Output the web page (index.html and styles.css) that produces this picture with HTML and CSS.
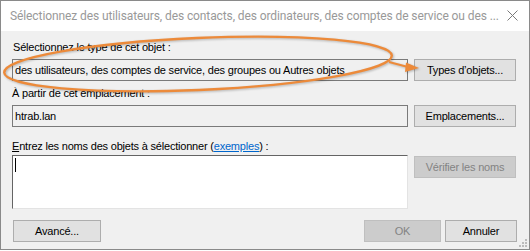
FILE: index.html
```html
<!DOCTYPE html>
<html lang="fr">
<head>
<meta charset="utf-8">
<link rel="stylesheet" href="styles.css">
</head>
<body>
<div class="window">
  <div class="titlebar">
    <span class="title">Sélectionnez des utilisateurs, des contacts, des ordinateurs, des comptes de service ou des ...</span>
    <svg class="close" width="11" height="11" viewBox="0 0 11 11"><path d="M0.5 0.5 L10.5 10.5 M10.5 0.5 L0.5 10.5" stroke="#7a7a7a" stroke-width="1" fill="none"/></svg>
  </div>
  <div class="content">
    <div class="label l1">Sélectionnez le type de cet objet :</div>
    <div class="row">
      <div class="field">des utilisateurs, des comptes de service, des groupes ou Autres objets</div>
      <div class="btn">Types d’objets...</div>
    </div>
    <div class="label l2">À partir de cet emplacement :</div>
    <div class="row">
      <div class="field">htrab.lan</div>
      <div class="btn">Emplacements...</div>
    </div>
    <div class="label l3"><u>E</u>ntrez les noms des objets à sélectionner (<span class="link">exemples</span>) :</div>
    <div class="row top">
      <div class="textarea"><span class="caret"></span></div>
      <div class="btn disabled">Vérifier les noms</div>
    </div>
    <div class="footer">
      <div class="btn adv">Avancé...</div>
      <div class="spacer"></div>
      <div class="btn disabled ok">OK</div>
      <div class="btn cancel">Annuler</div>
    </div>
  </div>
  <svg class="grip" width="8" height="8" viewBox="0 0 8 8">
    <rect x="6" y="0" width="2" height="2" fill="#bcbcbc"/>
    <rect x="3" y="3" width="2" height="2" fill="#bcbcbc"/>
    <rect x="6" y="3" width="2" height="2" fill="#bcbcbc"/>
    <rect x="0" y="6" width="2" height="2" fill="#bcbcbc"/>
    <rect x="3" y="6" width="2" height="2" fill="#bcbcbc"/>
    <rect x="6" y="6" width="2" height="2" fill="#bcbcbc"/>
  </svg>
  <svg class="annot" width="530" height="251" viewBox="0 0 530 251">
    <ellipse cx="198" cy="64" rx="194" ry="26" transform="rotate(-2.5 198 64)" fill="none" stroke="#ec8a3a" stroke-width="2.4"/>
    <path d="M389 62 L408 67" stroke="#ec8a3a" stroke-width="2" fill="none"/>
    <path d="M406 62.5 L419 68 L405 72 Z" fill="#ec8a3a"/>
  </svg>
</div>
</body>
</html>
```
FILE: styles.css
```css
* { box-sizing: border-box; }
html, body { margin: 0; padding: 0; background: #ffffff; }
body { width: 530px; height: 251px; overflow: hidden; font-family: "Liberation Sans", Arial, sans-serif; font-size: 11px; color: #000; }
.window { position: relative; width: 530px; height: 250px; border: 1px solid #8a8a8a; background: #f0f0f0; display: flex; flex-direction: column; }
.titlebar { height: 30px; background: #ffffff; display: flex; align-items: center; padding: 0 11px 0 9px; }
.title { flex: 1; font-family: Roboto, "Noto Sans", sans-serif; font-size: 12px; letter-spacing: -0.1px; color: #999999; white-space: nowrap; }
.close { flex: none; margin-top: -1px; }
.content { flex: 1; padding: 10px 12px 0 11px; display: flex; flex-direction: column; letter-spacing: -0.2px; }
.label { height: 13px; line-height: 13px; white-space: nowrap; }
.l1 { margin-left: 1px; }
.l2 { margin-top: 6px; }
.l3 { margin-top: 13px; }
.row { display: flex; gap: 6px; margin-top: 5px; align-items: flex-start; }
.l3 + .row { margin-top: 2px; }
.field { width: 396px; height: 22px; border: 1px solid #7a7a7a; background: #f0f0f0; line-height: 20px; padding-left: 2px; white-space: nowrap; overflow: hidden; }
.btn { width: 102px; height: 22px; border: 1px solid #adadad; background: #e1e1e1; text-align: center; line-height: 20px; white-space: nowrap; }
.btn.disabled { background: #cccccc; border-color: #bfbfbf; color: #838383; }
.row.top .btn { margin-top: 1px; }
.textarea { position: relative; width: 396px; height: 54px; background: #fff; border-style: solid; border-width: 1px; border-color: #646464 #e3e3e3 #e3e3e3 #646464; }
.caret { display: block; width: 1px; height: 14px; background: #000; margin: 2px 0 0 2px; }
.link { color: #0066cc; text-decoration: underline; }
.footer { display: flex; margin-top: 11px; gap: 4px; padding-left: 1px; }
.spacer { flex: 1; }
.btn.adv { width: 88px; }
.btn.ok { width: 77px; }
.btn.cancel { width: 72px; }
.grip { position: absolute; right: 2px; bottom: 2px; }
.annot { position: absolute; left: -1px; top: -1px; pointer-events: none; filter: drop-shadow(1px 1px 1px rgba(0,0,0,0.25)); }
```
